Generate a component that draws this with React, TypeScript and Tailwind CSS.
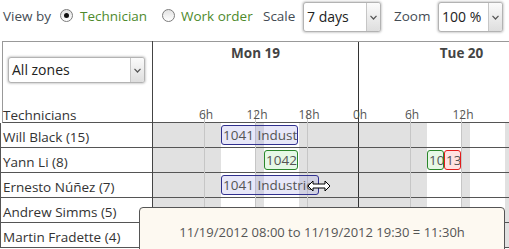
import React from "react";

const HOUR = 206 / 24;

const TECHNICIANS = [
  "Will Black (15)",
  "Yann Li (8)",
  "Ernesto Núñez (7)",
  "Andrew Simms (5)",
  "Martin Fradette (4)",
];

type Job = {
  row: number;
  day: number;
  start: number;
  end: number;
  label: string;
  kind: "blue" | "green" | "red";
};

const JOBS: Job[] = [
  { row: 0, day: 0, start: 8, end: 17, label: "1041 Industrie", kind: "blue" },
  { row: 1, day: 0, start: 13, end: 17, label: "1042", kind: "green" },
  { row: 1, day: 1, start: 8, end: 10, label: "10", kind: "green" },
  { row: 1, day: 1, start: 10, end: 12, label: "13", kind: "red" },
  { row: 2, day: 0, start: 8, end: 19.5, label: "1041 Industrie", kind: "blue" },
];

const KIND_CLASS = {
  blue: "border-[#30308f] bg-[rgba(160,160,230,0.24)]",
  green: "border-[#2a862a] bg-[rgba(150,225,150,0.24)]",
  red: "border-[#e21d1d] bg-[rgba(255,150,150,0.28)]",
};

const TICKS = [
  { day: 0, h: 6 },
  { day: 0, h: 12 },
  { day: 0, h: 18 },
  { day: 1, h: 0 },
  { day: 1, h: 6 },
  { day: 1, h: 12 },
];

function xOf(day: number, h: number) {
  return Math.round(day * 206 + h * HOUR - 1);
}

function Radio({ checked }: { checked?: boolean }) {
  return (
    <div className="w-[13px] h-[13px] shrink-0 rounded-full border border-[#7c7c7c] bg-gradient-to-b from-[#e2e2e2] to-white flex items-center justify-center mb-[3px]">
      {checked && <div className="w-[5px] h-[5px] rounded-full bg-[#111]" />}
    </div>
  );
}

function Chevron() {
  return (
    <svg width="7" height="5" viewBox="0 0 7 5">
      <polyline points="0.5,0.8 3.5,4 6.5,0.8" fill="none" stroke="#555" strokeWidth="1.2" />
    </svg>
  );
}

function FakeSelect({ value, className }: { value: string; className: string }) {
  return (
    <div
      className={
        "shrink-0 flex bg-white border border-[#b3b3b3] rounded-[3px] shadow-[0_0_2px_1px_rgba(0,0,0,0.18)] " +
        className
      }
    >
      <div className="flex-1 pl-[3px] text-[14px] leading-[18px] text-[#222] self-center pb-[1px]">
        {value}
      </div>
      <div className="w-[14px] border-l border-[#c6c6c6] rounded-r-[2px] bg-gradient-to-b from-[#fbfbfb] to-[#dedede] flex items-center justify-center">
        <Chevron />
      </div>
    </div>
  );
}

function DayShade() {
  return (
    <div className="w-[206px] shrink-0 border-r border-[#333] flex">
      <div className="w-[68px] bg-[#e1e1e1]" />
      <div className="w-[35px] bg-white" />
      <div className="w-[8px] bg-[#e1e1e1]" />
      <div className="w-[35px] bg-white" />
      <div className="flex-1 bg-[#e1e1e1]" />
    </div>
  );
}

function ResizeCursor() {
  return (
    <svg width="24" height="12" viewBox="0 0 24 12" className="absolute left-[307px] top-[180px]">
      <polygon
        points="1,6 6,1 6,4 18,4 18,1 23,6 18,11 18,8 6,8 6,11"
        fill="white"
        stroke="black"
        strokeWidth="1"
        strokeLinejoin="miter"
      />
    </svg>
  );
}

export default function App() {
  return (
    <div className="relative w-[509px] h-[249px] overflow-hidden bg-white text-[#333] font-['Open_Sans',sans-serif]">
      {/* Toolbar */}
      <div className="flex items-center h-[34px] text-[13.5px] leading-[18px]">
        <span className="ml-[3px] w-[57px] shrink-0 text-[#444c54] mb-[3px]">View by</span>
        <Radio checked />
        <span className="ml-[7px] w-[82px] shrink-0 text-[#4e8a2c] mb-[3px]">Technician</span>
        <Radio />
        <span className="ml-[6px] w-[82px] shrink-0 text-[#4e8a2c] mb-[3px]">Work order</span>
        <span className="w-[40px] shrink-0 text-[#444c54] mb-[3px]">Scale</span>
        <FakeSelect value="7 days" className="w-[78px] h-[30px]" />
        <span className="ml-[13px] w-[44px] shrink-0 text-[#444c54] mb-[3px]">Zoom</span>
        <FakeSelect value="100 %" className="w-[65px] h-[30px]" />
      </div>

      {/* Planning grid */}
      <div className="flex mt-[7px]">
        {/* Technician column */}
        <div className="w-[153px] shrink-0 border-r border-[#444]">
          <div className="ml-[2px] h-[82px] border-l border-t border-[#999] border-b border-b-[#555]">
            <FakeSelect value="All zones" className="ml-[5px] mt-[15px] w-[137px] h-[26px]" />
            <div className="mt-[23px] text-[13.5px] leading-[18px] text-[#333]">Technicians</div>
          </div>
          {TECHNICIANS.map((name) => (
            <div
              key={name}
              className="h-[25px] border-l border-b border-[#555] pl-[2px] pt-[5px] text-[13.5px] leading-[19px] text-[#333] whitespace-nowrap"
            >
              {name}
            </div>
          ))}
        </div>

        {/* Timeline */}
        <div className="relative flex-1 overflow-hidden">
          <div className="flex h-[82px] border-t border-[#999] border-b border-b-[#555]">
            {["Mon 19", "Tue 20"].map((d) => (
              <div
                key={d}
                className="w-[206px] shrink-0 border-r border-[#333] pt-[2px] text-center text-[13.5px] leading-[18px] font-bold text-[#444]"
              >
                {d}
              </div>
            ))}
          </div>

          {TECHNICIANS.map((name) => (
            <div key={name} className="flex h-[25px] border-b border-[#555]">
              <DayShade />
              <DayShade />
            </div>
          ))}

          {TICKS.map((t) => {
            const x = xOf(t.day, t.h);
            return (
              <React.Fragment key={`${t.day}-${t.h}`}>
                {t.h !== 0 && (
                  <div
                    className="absolute top-[70px] bottom-0 w-px bg-[#c6c6c6]"
                    style={{ left: x }}
                  />
                )}
                <div
                  className="absolute top-[68px] -translate-x-1/2 ml-[2px] text-[12px] leading-[12px] text-[#555] whitespace-nowrap"
                  style={{ left: x }}
                >
                  {t.h}h
                </div>
              </React.Fragment>
            );
          })}

          {JOBS.map((j, i) => {
            const left = xOf(j.day, j.start);
            const right = xOf(j.day, j.end);
            return (
              <div
                key={i}
                className={
                  "absolute h-[20px] border rounded-[3px] overflow-hidden whitespace-nowrap pl-px text-[13.5px] leading-[18px] text-[#555] " +
                  KIND_CLASS[j.kind]
                }
                style={{ left, width: right - left, top: 84 + j.row * 25 }}
              >
                {j.label}
              </div>
            );
          })}
        </div>
      </div>

      <ResizeCursor />

      {/* Tooltip */}
      <div className="absolute left-[139px] top-[207px] w-[366px] h-[60px] bg-[#fdf9f1] border border-[#555] rounded-[4px] pt-[15px] text-center text-[13px] leading-[18px] text-[#555] whitespace-nowrap">
        11/19/2012 08:00 to 11/19/2012 19:30 = 11:30h
      </div>
    </div>
  );
}
